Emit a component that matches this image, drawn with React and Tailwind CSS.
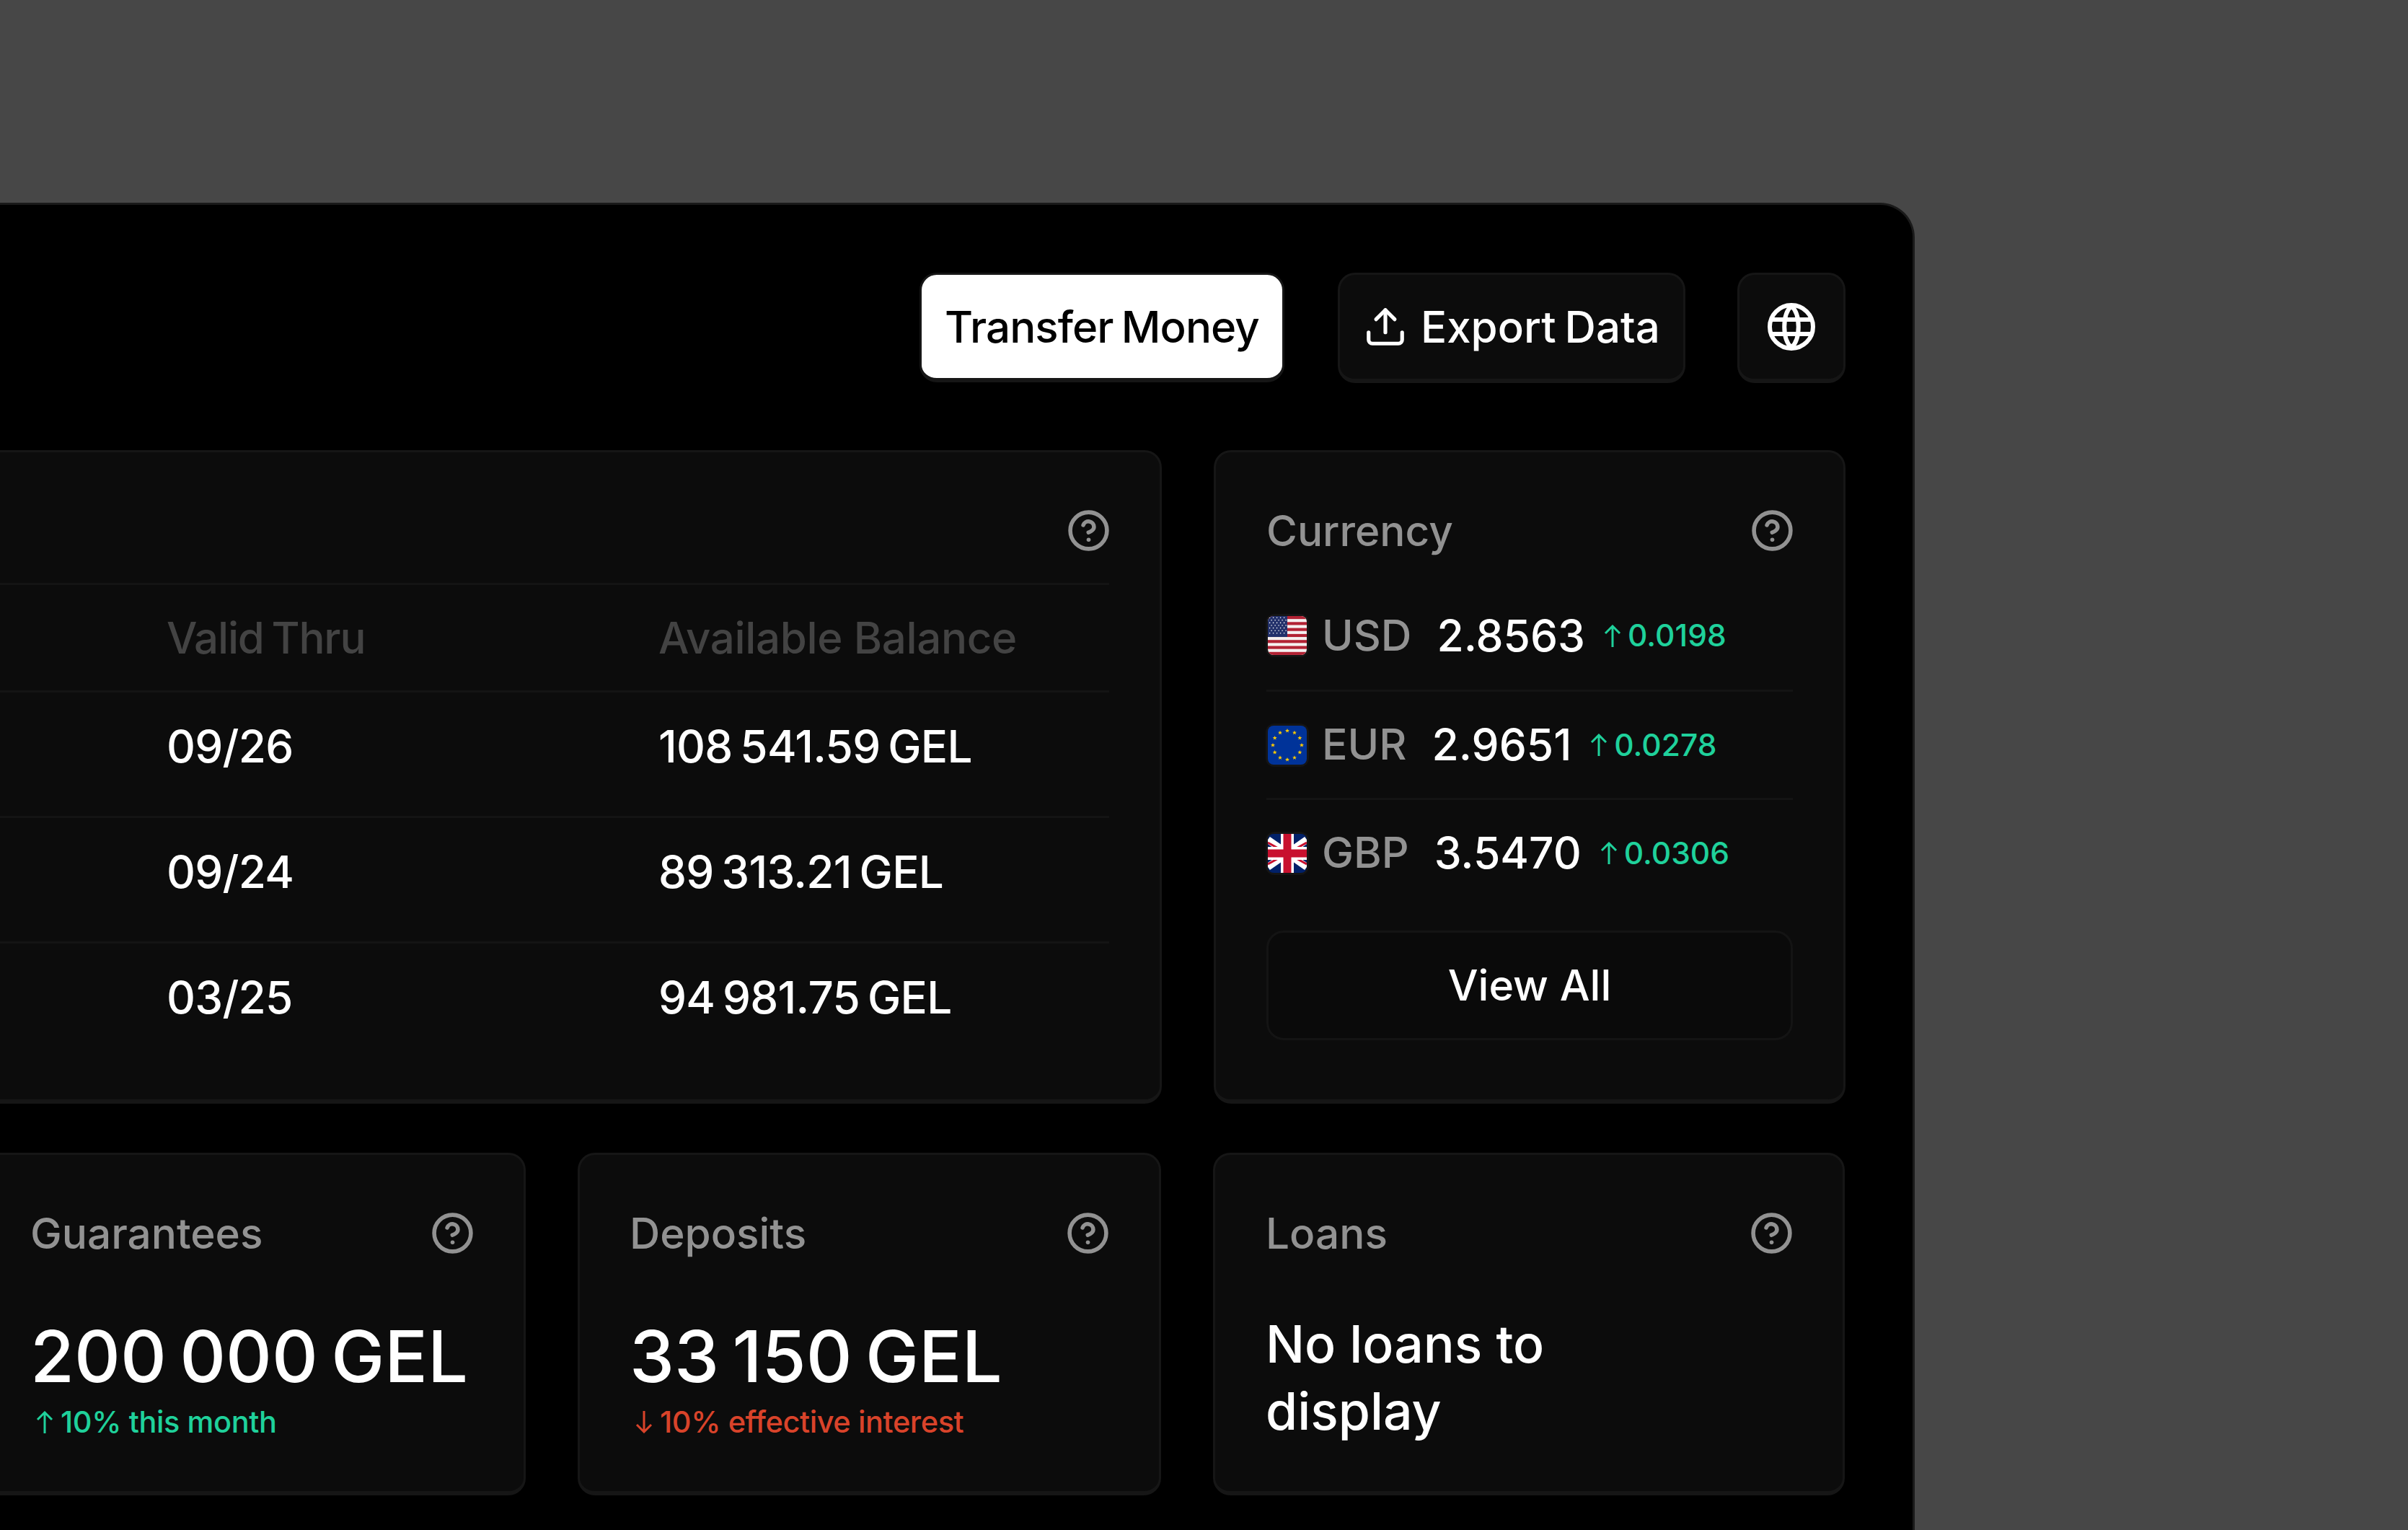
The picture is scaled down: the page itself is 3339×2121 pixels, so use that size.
import { CircleHelp, Upload } from 'lucide-react'

const rows = [
  { valid: '09/26', balance: '108 541.59 GEL' },
  { valid: '09/24', balance: '89 313.21 GEL' },
  { valid: '03/25', balance: '94 981.75 GEL' },
]

const currencies = [
  { code: 'USD', value: '2.8563', change: '0.0198', flag: <UsFlag /> },
  { code: 'EUR', value: '2.9651', change: '0.0278', flag: <EuFlag /> },
  { code: 'GBP', value: '3.5470', change: '0.0306', flag: <UkFlag /> },
]

const cardClass = 'rounded-[24px] border-[3px] border-b-[6px] border-[#161616] bg-[#0c0c0c]'

export default function App() {
  return (
    <div className="h-[2121px] w-[3339px] overflow-hidden bg-[#474747] pt-[281px] font-[450] text-white [font-family:Inter,sans-serif]">
      <div className="h-[1840px] w-[2655px] rounded-tr-[48px] border-t-[3px] border-r-[3px] border-[#1a1a1a] bg-black pt-[94px] pr-[93px]">
        <div className="flex justify-end gap-[72px]">
          <button className="mr-[2px] h-[152px] w-[506px] rounded-[24px] border-[3px] border-b-[6px] border-[#161616] bg-white text-[60px] tracking-[-0.015em] text-black [word-spacing:-4px]">
            Transfer Money
          </button>
          <button className={`${cardClass} flex h-[153px] w-[482px] items-center gap-[18px] pl-[32px] text-[60px] [word-spacing:-4px]`}>
            <Upload size={62} strokeWidth={2} />
            Export Data
          </button>
          <button className={`${cardClass} flex h-[153px] w-[150px] items-center justify-center`}>
            <GlobeIcon />
          </button>
        </div>

        <div className="mt-[93px] grid h-[906px] grid-cols-[1611px_876px] gap-[72px]">
          <div className={`${cardClass} rounded-l-none border-l-0 pt-[78px] pr-[70px]`}>
            <div className="-mr-[2px] flex justify-end">
              <HelpIcon />
            </div>
            <div className="mt-[42px] grid h-[149px] grid-cols-[682px_1fr] items-center border-t-[3px] border-[#141414] pl-[231px] text-[60px] text-[#434343]">
              <span className="tracking-[-0.02em] [word-spacing:-4px]">Valid Thru</span>
              <span className="tracking-[-0.006em]">Available Balance</span>
            </div>
            {rows.map((row) => (
              <div key={row.valid} className="grid h-[174px] grid-cols-[682px_1fr] items-center border-t-[3px] border-[#141414] pb-[22px] pl-[231px] text-[62px] tracking-[-0.012em] [word-spacing:-5px]">
                <span>{row.valid}</span>
                <span>{row.balance}</span>
              </div>
            ))}
          </div>

          <div className={`${cardClass} pt-[78px] pr-[68px] pl-[70px]`}>
            <CardTitle title="Currency" />
            <div className="mt-[40px] pr-[2px]">
              {currencies.map((item, index) => (
                <div key={item.code} className={`flex h-[150px] items-center ${index ? 'border-t-[3px] border-[#141414]' : ''}`}>
                  <span className="-ml-[1px] rounded-[12px] bg-[#151515] p-[3px]">{item.flag}</span>
                  <span className="ml-[18px] text-[59px] text-[#929292]">{item.code}</span>
                  <span className="ml-[35px] text-[60.5px]">{item.value}</span>
                  <span className="ml-[25px] flex items-center gap-[8px] text-[42.5px] text-[#1fd19b]">
                    <TrendArrow />
                    {item.change}
                  </span>
                </div>
              ))}
            </div>
            <button className="mt-[34px] mr-[2px] h-[152px] w-[730px] rounded-[24px] border-[3px] border-[#141414] bg-[#0a0a0a] text-[59px]">
              View All
            </button>
          </div>
        </div>

        <div className="mt-[68px] grid grid-cols-[729px_809px_876px] gap-[72px]">
          <StatCard title="Guarantees" value="200 000 GEL" note="10% this month" edge />
          <StatCard title="Deposits" value="33 150 GEL" note="10% effective interest" down />
          <div className={`${cardClass} h-[475px] pt-[78px] pr-[68px] pl-[70px]`}>
            <CardTitle title="Loans" />
            <p className="mt-[77px] text-[71.5px] leading-[93px]">
              No loans to
              <br />
              display
            </p>
          </div>
        </div>
      </div>
    </div>
  )
}

function CardTitle({ title }) {
  return (
    <div className="flex items-center justify-between text-[58.5px] leading-[61px] text-[#929292]">
      <span>{title}</span>
      <HelpIcon />
    </div>
  )
}

function StatCard({ title, value, note, down, edge }) {
  return (
    <div className={`${cardClass} h-[475px] pt-[78px] pr-[68px] ${edge ? 'rounded-l-none border-l-0 pl-[42px]' : 'pl-[69px]'}`}>
      <CardTitle title={title} />
      <p className="mt-[82px] text-[99px] leading-[116px] whitespace-nowrap [word-spacing:-8px]">{value}</p>
      <p className={`mt-[2px] ml-[7px] flex items-center gap-[9px] text-[41.5px] tracking-[-0.01em] ${down ? 'text-[#d9432a]' : 'text-[#1fd19b]'}`}>
        <TrendArrow down={down} />
        {note}
      </p>
    </div>
  )
}

function HelpIcon() {
  return <CircleHelp size={61} strokeWidth={2.2} className="shrink-0 text-[#929292]" />
}

function TrendArrow({ down }) {
  return (
    <svg width="26" height="31" viewBox="0 0 26 31" fill="none" stroke="currentColor" strokeWidth="3" className={down ? 'shrink-0 rotate-180' : 'shrink-0'}>
      <path d="M13 2V31M3 12L13 2L23 12" />
    </svg>
  )
}

function GlobeIcon() {
  return (
    <svg width="66" height="66" viewBox="0 0 66 66" fill="none" stroke="white" strokeWidth="6">
      <circle cx="33" cy="33" r="30" />
      <path d="M33 4C20 16 20 50 33 62C46 50 46 16 33 4Z" />
      <path d="M5 23H61M5 43H61" />
    </svg>
  )
}

function UsFlag() {
  const stripes = [0, 1, 2, 3, 4, 5, 6]
  const stars = []
  for (let y = 0; y < 7; y++) {
    for (let x = 0; x < 5; x++) {
      stars.push(<circle key={`${x}-${y}`} cx={2.6 + x * 5 + (y % 2 ? 2.5 : 0)} cy={2.2 + y * 3.6} r="0.8" fill="white" />)
    }
  }
  return (
    <svg width="54" height="54" viewBox="0 0 54 54" className="block rounded-[8px]">
      <rect width="54" height="54" fill="#f5f0f0" />
      {stripes.map((i) => (
        <rect key={i} y={i * 8.3} width="54" height="4.15" fill="#b22234" />
      ))}
      <rect width="27" height="29" fill="#23316b" />
      {stars}
    </svg>
  )
}

function EuFlag() {
  const stars = Array.from({ length: 12 }, (_, i) => {
    const angle = (i * Math.PI) / 6
    return [27 + 20 * Math.sin(angle), 27 - 20 * Math.cos(angle)]
  })
  return (
    <svg width="54" height="54" viewBox="0 0 54 54" className="block rounded-[8px]">
      <rect width="54" height="54" fill="#003399" />
      {stars.map(([x, y], i) => (
        <polygon
          key={i}
          transform={`translate(${x} ${y})`}
          points="0,-3 0.9,-0.9 3,-0.9 1.3,0.4 1.9,2.6 0,1.2 -1.9,2.6 -1.3,0.4 -3,-0.9 -0.9,-0.9"
          fill="#ffcc00"
        />
      ))}
    </svg>
  )
}

function UkFlag() {
  return (
    <svg width="54" height="54" viewBox="0 0 54 54" className="block rounded-[8px]">
      <rect width="54" height="54" fill="#012169" />
      <path d="M0 8L54 46M54 8L0 46" stroke="white" strokeWidth="10" />
      <path d="M0 12L18 22M54 42L36 32M54 12L36 22M0 42L18 32" stroke="#c8102e" strokeWidth="3" />
      <path d="M27 0V54M0 27H54" stroke="white" strokeWidth="18" />
      <path d="M27 0V54M0 27H54" stroke="#c8102e" strokeWidth="11" />
    </svg>
  )
}
